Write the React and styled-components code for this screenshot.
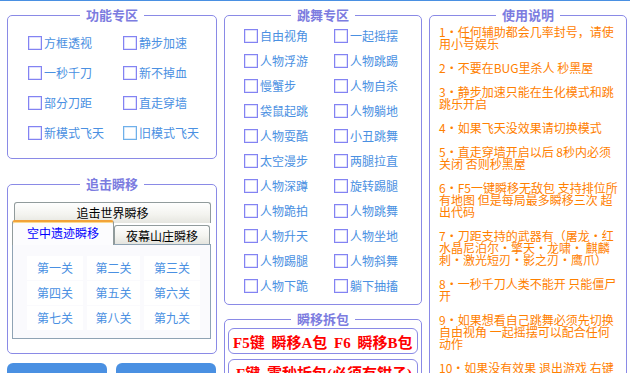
import React from "react";
import styled, { createGlobalStyle } from "styled-components";

const GlobalStyle = createGlobalStyle`
  html, body {
    margin: 0;
    padding: 0;
    background: #fff;
  }
  body {
    font-family: "Noto Sans CJK SC", "Liberation Sans", sans-serif;
    font-size: 12px;
  }
`;

const features = [
  ["方框透视", "静步加速"],
  ["一秒千刀", "新不掉血"],
  ["部分刀距", "直走穿墙"],
  ["新模式飞天", "旧模式飞天"],
];

const dances = [
  ["自由视角", "一起摇摆"],
  ["人物浮游", "人物跳踢"],
  ["慢蟹步", "人物自杀"],
  ["袋鼠起跳", "人物躺地"],
  ["人物耍酷", "小丑跳舞"],
  ["太空漫步", "两腿拉直"],
  ["人物深蹲", "旋转踢腿"],
  ["人物跪拍", "人物跳舞"],
  ["人物升天", "人物坐地"],
  ["人物踢腿", "人物斜舞"],
  ["人物下跪", "躺下抽搐"],
];

const levels = ["第一关", "第二关", "第三关", "第四关", "第五关", "第六关", "第七关", "第八关", "第九关"];

const notes = [
  ["1", ["任何辅助都会几率封号，请使", "用小号娱乐"]],
  ["2", ["不要在BUG里杀人 秒黑屋"]],
  ["3", ["静步加速只能在生化模式和跳", "跳乐开启"]],
  ["4", ["如果飞天没效果请切换模式"]],
  ["5", ["直走穿墙开启以后 8秒内必须", "关闭 否则秒黑屋"]],
  ["6", ["F5一键瞬移无敌包 支持排位所", "有地图 但是每局最多瞬移三次 超", "出代码"]],
  ["7", ["刀距支持的武器有（屠龙·红", "水晶尼泊尔·擎天·龙啸· 麒麟", "刺·激光短刃·影之刃·鹰爪）"]],
  ["8", ["一秒千刀人类不能开 只能僵尸", "开"]],
  ["9", ["如果想看自己跳舞必须先切换", "自由视角 一起摇摆可以配合任何", "动作"]],
  ["10", ["如果没有效果 退出游戏 右键", "以管理员身份运行"]],
];

const Page = styled.div`
  width: 630px;
  height: 373px;
  overflow: hidden;
  box-sizing: border-box;
  border-top: 1px solid #4a90e2;
  padding: 7px 0 0 7px;
  display: flex;
  align-items: flex-start;
  gap: 7px;
`;

const Column = styled.div`
  flex: none;
  width: ${(p) => p.$w}px;
  display: flex;
  flex-direction: column;
`;

const Panel = styled.fieldset`
  margin: ${(p) => p.$mt || 0}px 0 0;
  min-width: 0;
  min-height: ${(p) => p.$minH || 0}px;
  border: 1px solid #8a8ae6;
  border-radius: 5px;
  padding: ${(p) => p.$pad};
`;

const Legend = styled.legend`
  margin: 0 auto;
  padding: 0 6px;
  font-size: 13px;
  line-height: 14px;
  font-weight: bold;
  color: #7c7ce0;
`;

const CheckGrid = styled.div`
  display: grid;
  grid-template-columns: ${(p) => p.$col}px ${(p) => p.$col}px;
  grid-auto-rows: ${(p) => p.$row}px;
  padding-left: ${(p) => p.$left}px;
`;

const Check = styled.label`
  display: flex;
  align-items: center;
  gap: 2px;
  color: #4a90e2;
  white-space: nowrap;
  line-height: 14px;
`;

const Box = styled.span`
  flex: none;
  width: 14px;
  height: 14px;
  box-sizing: border-box;
  border: 1px solid ${(p) => (p.$alt ? "#6fb0ea" : "#8383f3")};
  box-shadow: inset 0 0 0 0.5px ${(p) => (p.$alt ? "#b4d6f5" : "#c4c4fa")};
  background: #fff;
`;

const TabArea = styled.div`
  display: flex;
  flex-direction: column;
  padding: 0 5px 0 4px;
`;

const TopTab = styled.div`
  margin-left: 2px;
  height: 21px;
  box-sizing: border-box;
  border: 1px solid #919b9c;
  border-bottom: none;
  border-radius: 3px 3px 0 0;
  background: linear-gradient(#fefefe, #f4f4f0 55%, #e6e6e0);
  color: #000;
  text-align: center;
  line-height: 20px;
`;

const TabRow = styled.div`
  display: flex;
  align-items: flex-end;
  margin-top: -3px;
`;

const Tab = styled.div`
  flex: none;
  box-sizing: border-box;
  width: ${(p) => p.$w}px;
  height: 19px;
  border: 1px solid #919b9c;
  border-bottom: none;
  border-radius: 3px 3px 0 0;
  text-align: center;
  line-height: 19px;
  color: #000;
  background: linear-gradient(#fefefe, #f4f4f0 55%, #e4e4de);
  ${(p) =>
    p.$active &&
    `
    height: 25px;
    line-height: 21px;
    color: #0000ff;
    background: #fcfcfe;
    border-top: 2px solid #f2a33a;
    box-shadow: inset 0 1px 0 #fcd98e;
    position: relative;
    z-index: 1;
    margin-bottom: -1px;
  `}
`;

const TabBody = styled.div`
  border: 1px solid #8fa3b4;
  background: #fafafd;
  padding: 11px 0 8px 14px;
  display: grid;
  grid-template-columns: 56px 53px 56px;
  grid-auto-rows: 24px;
  column-gap: 4px;
  row-gap: 1px;
`;

const Level = styled.div`
  background: #fff;
  color: #4a90e2;
  text-align: center;
  line-height: 24px;
`;

const ButtonRow = styled.div`
  display: flex;
  gap: 9px;
  margin-top: 9px;
`;

const BlueButton = styled.div`
  width: 100px;
  height: 30px;
  box-sizing: border-box;
  padding-top: 9px;
  border-radius: 6px 6px 0 0;
  background: #4a90e2;
  color: #fff;
  font-weight: bold;
  text-align: center;
`;

const KeyBox = styled.div`
  height: 26px;
  box-sizing: border-box;
  margin-bottom: 5px;
  border: 1px solid #8a8ae6;
  border-radius: 6px;
  padding-left: ${(p) => p.$left}px;
  display: flex;
  align-items: center;
  color: #ff0000;
  font-family: "Liberation Serif", "Noto Sans CJK SC", serif;
  font-size: 15px;
  font-weight: bold;
  word-spacing: 3px;
  white-space: nowrap;
  overflow: hidden;
`;

const Notes = styled.div`
  padding: 4px 4px 0 9px;
  color: #ff8000;
  line-height: 12px;
`;

const Note = styled.p`
  margin: 0 0 12px;
  white-space: nowrap;
`;

const Dot = styled.span`
  display: inline-block;
  width: 12px;
  text-align: center;
`;

const CheckList = ({ rows, col, row, left }) => (
  <CheckGrid $col={col} $row={row} $left={left}>
    {rows.flat().map((t, i) => (
      <Check key={i}>
        <Box $alt={t === "旧模式飞天"} />
        {t}
      </Check>
    ))}
  </CheckGrid>
);

export default function App() {
  return (
    <>
      <GlobalStyle />
      <Page>
        <Column $w={210}>
          <Panel $pad="6px 0 10px">
            <Legend>功能专区</Legend>
            <CheckList rows={features} col={95} row={30} left={20} />
          </Panel>
          <Panel $mt={18} $pad="11px 0 14px">
            <Legend>追击瞬移</Legend>
            <TabArea>
              <TopTab>追击世界瞬移</TopTab>
              <TabRow>
                <Tab $active $w={102}>空中遗迹瞬移</Tab>
                <Tab $w={96}>夜幕山庄瞬移</Tab>
              </TabRow>
              <TabBody>
                {levels.map((l) => (
                  <Level key={l}>{l}</Level>
                ))}
              </TabBody>
            </TabArea>
          </Panel>
          <ButtonRow>
            <BlueButton>点击我加入QQ群</BlueButton>
            <BlueButton>点击我联系作者</BlueButton>
          </ButtonRow>
        </Column>

        <Column $w={198}>
          <Panel $pad="1px 0 6px">
            <Legend>跳舞专区</Legend>
            <CheckList rows={dances} col={90} row={25} left={19} />
          </Panel>
          <Panel $mt={7} $pad="2px 3px 0">
            <Legend>瞬移拆包</Legend>
            <KeyBox $left={4}>F5键 瞬移A包 F6 瞬移B包</KeyBox>
            <KeyBox $left={7}>F键 零秒拆包(必须有钳子)</KeyBox>
          </Panel>
        </Column>

        <Column $w={198}>
          <Panel $pad="0" $minH={400}>
            <Legend>使用说明</Legend>
            <Notes>
              {notes.map(([n, lines]) => (
                <Note key={n}>
                  {n}
                  <Dot>·</Dot>
                  {lines.map((ln, i) => (
                    <React.Fragment key={i}>
                      {i > 0 && <br />}
                      {ln}
                    </React.Fragment>
                  ))}
                </Note>
              ))}
            </Notes>
          </Panel>
        </Column>
      </Page>
    </>
  );
}
